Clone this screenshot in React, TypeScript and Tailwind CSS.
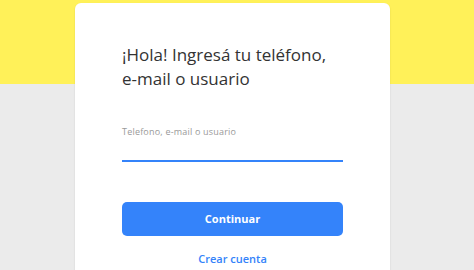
import React from 'react';

export default function App() {
  return (
    <div className="relative w-[474px] h-[270px] overflow-hidden bg-[#ebebeb]" style={{ fontFamily: '"Open Sans", Arial, sans-serif' }}>
      <div className="h-[84px] bg-[#fff159]" />
      <div className="absolute left-[75px] top-[3px] w-[315px] h-[300px] bg-white rounded-[6px] shadow-[0_1px_2px_rgba(0,0,0,0.12)] px-[47px] pt-[40px]">
        <h1 className="text-[17px] leading-[24px] text-[#333] font-normal">
          ¡Hola! Ingresá tu teléfono,
          <br />
          e-mail o usuario
        </h1>
        <div className="mt-[35px]">
          <label className="block text-[9px] leading-[12px] text-[#999] tracking-[0.2px]">Telefono, e-mail o usuario</label>
          <div className="mt-[22px] h-[2px] bg-[#3483fa]" />
        </div>
        <button className="mt-[40px] w-full h-[34px] rounded-[5px] bg-[#3483fa] text-white text-[11px] font-bold">
          Continuar
        </button>
        <div className="mt-[15px] text-center text-[11px] leading-[16px] font-semibold text-[#3483fa]">Crear cuenta</div>
      </div>
    </div>
  );
}
